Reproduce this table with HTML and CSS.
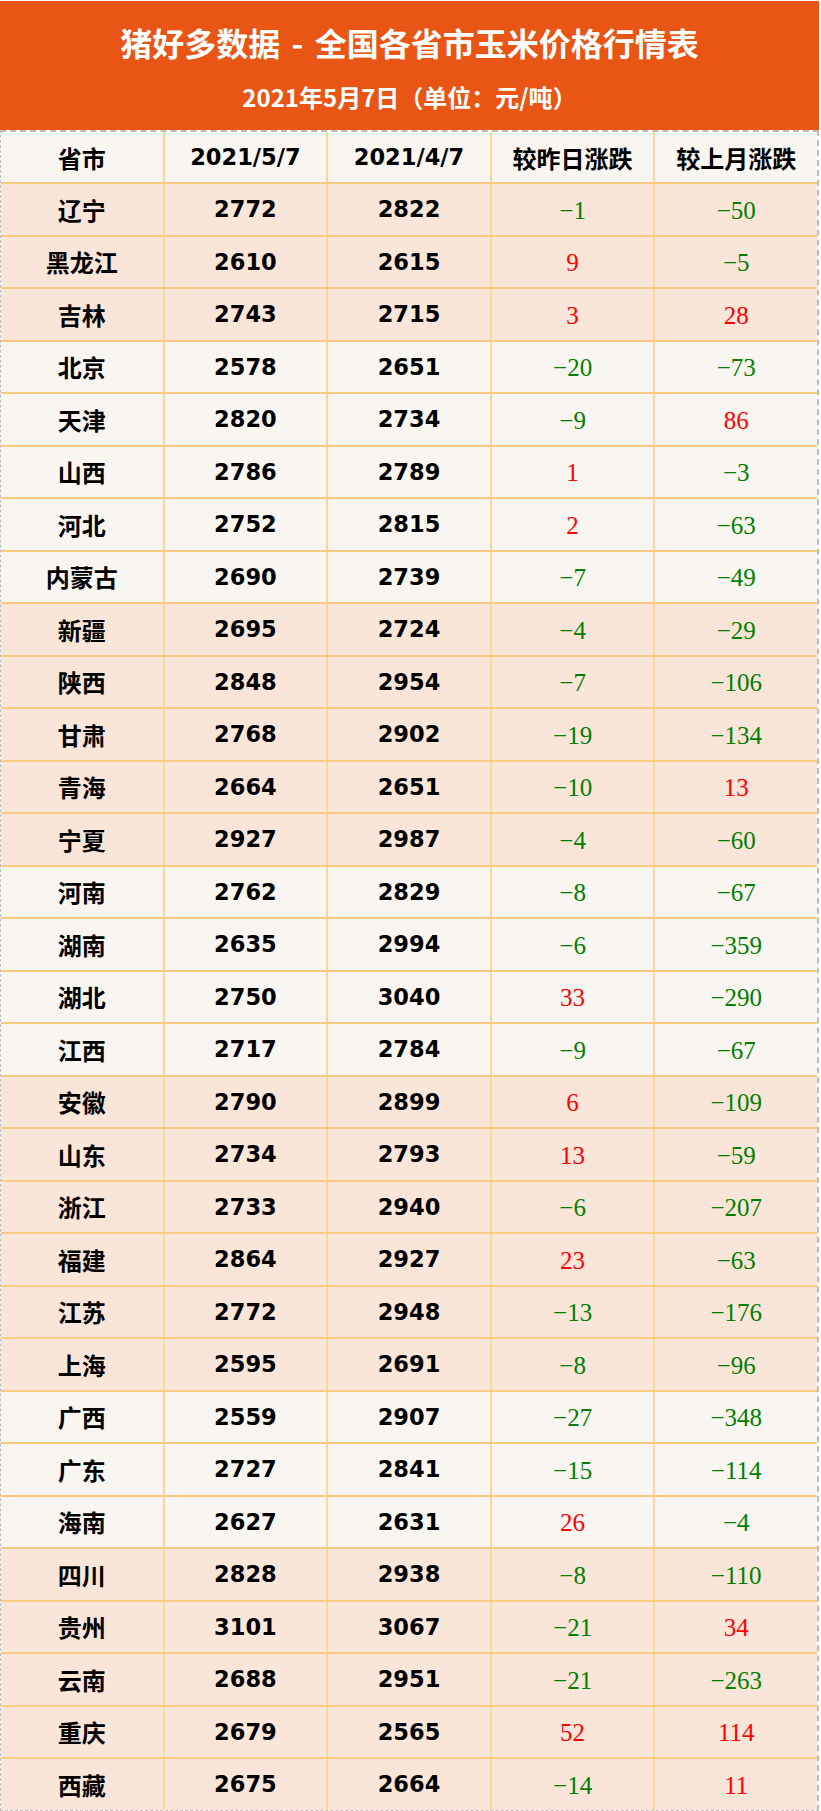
FILE: index.html
```html
<!DOCTYPE html>
<html lang="zh-CN">
<head>
<meta charset="utf-8">
<title>猪好多数据 - 全国各省市玉米价格行情表</title>
<link rel="stylesheet" href="styles.css">
</head>
<body>
<header class="banner">
  <h1 class="title">猪好多数据 - 全国各省市玉米价格行情表</h1>
  <p class="subtitle">2021年5月7日<span class="pl">（</span>单位<span class="pc">：</span>元/吨<span class="pr">）</span></p>
</header>
<main class="sheet">
  <div class="row head">
    <div class="cell name">省市</div>
    <div class="cell num">2021/5/7</div>
    <div class="cell num">2021/4/7</div>
    <div class="cell name">较昨日涨跌</div>
    <div class="cell name">较上月涨跌</div>
  </div>
  <div class="row peach"><div class="cell name">辽宁</div><div class="cell num">2772</div><div class="cell num">2822</div><div class="cell chg down">−1</div><div class="cell chg down">−50</div></div>
  <div class="row peach"><div class="cell name">黑龙江</div><div class="cell num">2610</div><div class="cell num">2615</div><div class="cell chg up">9</div><div class="cell chg down">−5</div></div>
  <div class="row peach"><div class="cell name">吉林</div><div class="cell num">2743</div><div class="cell num">2715</div><div class="cell chg up">3</div><div class="cell chg up">28</div></div>
  <div class="row light"><div class="cell name">北京</div><div class="cell num">2578</div><div class="cell num">2651</div><div class="cell chg down">−20</div><div class="cell chg down">−73</div></div>
  <div class="row light"><div class="cell name">天津</div><div class="cell num">2820</div><div class="cell num">2734</div><div class="cell chg down">−9</div><div class="cell chg up">86</div></div>
  <div class="row light"><div class="cell name">山西</div><div class="cell num">2786</div><div class="cell num">2789</div><div class="cell chg up">1</div><div class="cell chg down">−3</div></div>
  <div class="row light"><div class="cell name">河北</div><div class="cell num">2752</div><div class="cell num">2815</div><div class="cell chg up">2</div><div class="cell chg down">−63</div></div>
  <div class="row light"><div class="cell name">内蒙古</div><div class="cell num">2690</div><div class="cell num">2739</div><div class="cell chg down">−7</div><div class="cell chg down">−49</div></div>
  <div class="row peach"><div class="cell name">新疆</div><div class="cell num">2695</div><div class="cell num">2724</div><div class="cell chg down">−4</div><div class="cell chg down">−29</div></div>
  <div class="row peach"><div class="cell name">陕西</div><div class="cell num">2848</div><div class="cell num">2954</div><div class="cell chg down">−7</div><div class="cell chg down">−106</div></div>
  <div class="row peach"><div class="cell name">甘肃</div><div class="cell num">2768</div><div class="cell num">2902</div><div class="cell chg down">−19</div><div class="cell chg down">−134</div></div>
  <div class="row peach"><div class="cell name">青海</div><div class="cell num">2664</div><div class="cell num">2651</div><div class="cell chg down">−10</div><div class="cell chg up">13</div></div>
  <div class="row peach"><div class="cell name">宁夏</div><div class="cell num">2927</div><div class="cell num">2987</div><div class="cell chg down">−4</div><div class="cell chg down">−60</div></div>
  <div class="row light"><div class="cell name">河南</div><div class="cell num">2762</div><div class="cell num">2829</div><div class="cell chg down">−8</div><div class="cell chg down">−67</div></div>
  <div class="row light"><div class="cell name">湖南</div><div class="cell num">2635</div><div class="cell num">2994</div><div class="cell chg down">−6</div><div class="cell chg down">−359</div></div>
  <div class="row light"><div class="cell name">湖北</div><div class="cell num">2750</div><div class="cell num">3040</div><div class="cell chg up">33</div><div class="cell chg down">−290</div></div>
  <div class="row light"><div class="cell name">江西</div><div class="cell num">2717</div><div class="cell num">2784</div><div class="cell chg down">−9</div><div class="cell chg down">−67</div></div>
  <div class="row peach"><div class="cell name">安徽</div><div class="cell num">2790</div><div class="cell num">2899</div><div class="cell chg up">6</div><div class="cell chg down">−109</div></div>
  <div class="row peach"><div class="cell name">山东</div><div class="cell num">2734</div><div class="cell num">2793</div><div class="cell chg up">13</div><div class="cell chg down">−59</div></div>
  <div class="row peach"><div class="cell name">浙江</div><div class="cell num">2733</div><div class="cell num">2940</div><div class="cell chg down">−6</div><div class="cell chg down">−207</div></div>
  <div class="row peach"><div class="cell name">福建</div><div class="cell num">2864</div><div class="cell num">2927</div><div class="cell chg up">23</div><div class="cell chg down">−63</div></div>
  <div class="row peach"><div class="cell name">江苏</div><div class="cell num">2772</div><div class="cell num">2948</div><div class="cell chg down">−13</div><div class="cell chg down">−176</div></div>
  <div class="row peach"><div class="cell name">上海</div><div class="cell num">2595</div><div class="cell num">2691</div><div class="cell chg down">−8</div><div class="cell chg down">−96</div></div>
  <div class="row light"><div class="cell name">广西</div><div class="cell num">2559</div><div class="cell num">2907</div><div class="cell chg down">−27</div><div class="cell chg down">−348</div></div>
  <div class="row light"><div class="cell name">广东</div><div class="cell num">2727</div><div class="cell num">2841</div><div class="cell chg down">−15</div><div class="cell chg down">−114</div></div>
  <div class="row light"><div class="cell name">海南</div><div class="cell num">2627</div><div class="cell num">2631</div><div class="cell chg up">26</div><div class="cell chg down">−4</div></div>
  <div class="row peach"><div class="cell name">四川</div><div class="cell num">2828</div><div class="cell num">2938</div><div class="cell chg down">−8</div><div class="cell chg down">−110</div></div>
  <div class="row peach"><div class="cell name">贵州</div><div class="cell num">3101</div><div class="cell num">3067</div><div class="cell chg down">−21</div><div class="cell chg up">34</div></div>
  <div class="row peach"><div class="cell name">云南</div><div class="cell num">2688</div><div class="cell num">2951</div><div class="cell chg down">−21</div><div class="cell chg down">−263</div></div>
  <div class="row peach"><div class="cell name">重庆</div><div class="cell num">2679</div><div class="cell num">2565</div><div class="cell chg up">52</div><div class="cell chg up">114</div></div>
  <div class="row peach"><div class="cell name">西藏</div><div class="cell num">2675</div><div class="cell num">2664</div><div class="cell chg down">−14</div><div class="cell chg up">11</div></div>
</main>
</body>
</html>
```
FILE: styles.css
```css
html, body {
  margin: 0;
  padding: 0;
  background: #ffffff;
}

body {
  width: 821px;
  font-family: "Noto Sans CJK SC", sans-serif;
}

.banner {
  box-sizing: border-box;
  width: 819px;
  height: 129px;
  margin-top: 1px;
  padding-top: 25px;
  background: #e95514;
  color: #ffffff;
  text-align: center;
}

.title {
  margin: 0;
  font-family: "Noto Sans CJK SC", sans-serif;
  font-weight: 700;
  font-size: 32px;
  line-height: 32px;
  word-spacing: 4px;
}

.subtitle {
  margin: 27px 0 0;
  font-family: "Noto Sans CJK SC", sans-serif;
  font-weight: 700;
  font-size: 24px;
  line-height: 24px;
}

.pl,
.pr,
.pc {
  display: inline-block;
  width: 1em;
}

.pl {
  text-align: right;
}

.pr {
  text-align: left;
}

.pc {
  text-align: center;
}

.sheet {
  box-sizing: border-box;
  width: 819px;
  display: flex;
  flex-direction: column;
  gap: 2px;
  border-top: 2px dashed #bdbdbd;
  border-right: 2px dashed #bdbdbd;
  border-bottom: 1px dashed #bdbdbd;
  border-left: 1px dashed #bdbdbd;
  background: #f9ca80;
  background-clip: padding-box;
}

.row {
  display: grid;
  grid-template-columns: repeat(5, 1fr);
  column-gap: 2px;
  height: 50.5px;
  background: #fbd79c;
}

.row.head {
  height: 50px;
}

.cell {
  display: flex;
  align-items: center;
  justify-content: center;
  color: #000000;
  white-space: nowrap;
}

.head .cell,
.light .cell {
  background: #f9f5f0;
}

.peach .cell {
  background: #fae5d9;
}

.name {
  font-family: "Noto Sans CJK SC", sans-serif;
  font-weight: 700;
  font-size: 24px;
}

.num {
  font-family: "DejaVu Sans", "Noto Sans CJK SC", sans-serif;
  font-weight: 700;
  font-size: 22.5px;
}

.chg {
  box-sizing: border-box;
  padding-top: 3px;
  font-family: "Liberation Serif", "Times New Roman", serif;
  font-size: 25px;
}

.up {
  color: #ff0000;
}

.down {
  color: #008000;
}
```
